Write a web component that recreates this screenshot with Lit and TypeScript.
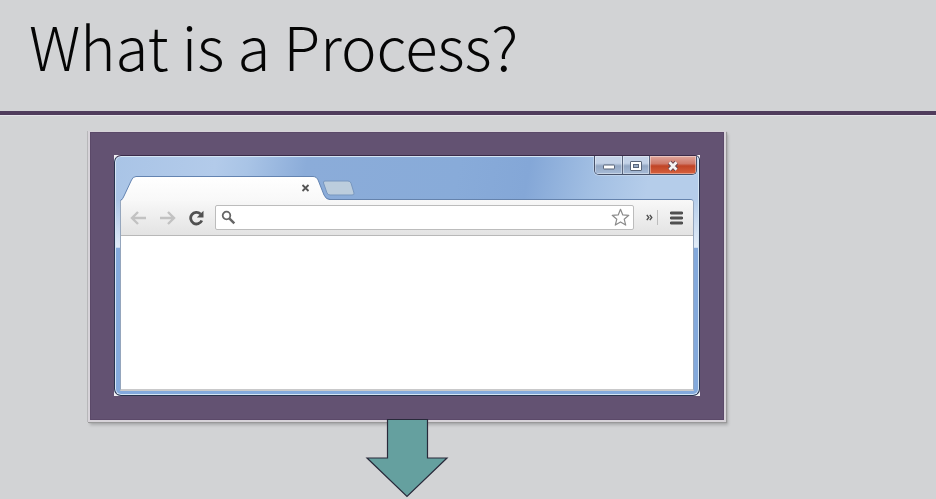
import { LitElement, html, css } from "lit";
import { customElement } from "lit/decorators.js";

@customElement("browser-window")
class BrowserWindow extends LitElement {
  static styles = css`
    :host { display: block; width: 586px; height: 241px; background: #f4f3f6; }
    .window { box-sizing: border-box; height: 241px; border: 1px solid #29344e; border-top-color: #3b2c4a; border-radius: 7px 5px 7px 7px; padding: 0 5px 4px; display: flex; flex-direction: column; position: relative; overflow: hidden;
      box-shadow: inset 0 0 0 1px #d5e5f4;
      background:
        linear-gradient(180deg, transparent 44px, rgba(240,246,252,.75) 91px, transparent 92px),
        linear-gradient(100deg, #a9c4e6 0, #b3cbea 100px, #a9c4e6 132px, #8bacd9 190px, #88abd9 340px, #84a7d7 410px, #a2bfe3 475px, #b5cdea 530px, #b5cdea 100%) 0 0 / 100% 92px no-repeat,
        #83a9dc; }
    .strip { height: 43px; flex: none; display: flex; align-items: flex-start; margin-right: -3px; }
    .tab { display: block; margin: 20px 0 0 0; flex: none; overflow: visible; position: relative; z-index: 1; }
    .controls { margin-left: auto; display: flex; box-sizing: border-box; height: 19px; width: 103px; border: 1px solid #48526a; border-top: 0; border-radius: 0 0 5px 5px; overflow: hidden; box-shadow: 0 0 0 1px #d3e1f180; }
    .control { display: flex; align-items: center; justify-content: center; border-right: 1px solid #59657d; box-shadow: inset 0 0 0 1px #ffffff60; background: linear-gradient(#c3d2e7 0 40%, #93a7c3 55%, #a7bbd7); width: 27px; }
    .control svg { position: relative; top: .5px; }
    .control.max { width: 26px; }
    .control.close { flex: 1; border: 0; background: linear-gradient(#dfa59b 0, #d07b6b 42%, #c04426 55%, #d7613e); }
    .body { flex: 1; display: flex; flex-direction: column; border: 1px solid #95a6bd; border-top-color: #6583ad; border-bottom: 2px solid #c9c9ca; border-radius: 3px 4px 0 0; background: #fff; }
    .bar { box-sizing: border-box; height: 36px; flex: none; padding: 0 9px; border-bottom: 1px solid #b8b8b8; background: linear-gradient(#f8f8f8, #e3e3e3); border-radius: 3px 3px 0 0; display: flex; align-items: center; }
    .bar svg { display: block; flex: none; }
    .fwd { margin-left: 12px; }
    .reload { margin-left: 12px; }
    .address { box-sizing: border-box; width: 419px; height: 25px; margin-left: 10px; background: #fff; border: 1px solid #bcbcbc; border-radius: 2px; display: flex; align-items: center; justify-content: space-between; padding: 0 3px 0 5px; }
    .more { margin-left: 12px; }
    .rule { width: 1px; height: 15px; margin-left: 4px; background: #bdbdbd; }
    .menu { margin-left: 12px; }
  `;

  render() {
    return html`
      <div class="window">
        <div class="strip">
          <svg class="tab" width="240" height="24" viewBox="0 0 240 24">
            <defs><linearGradient id="face" x1="0" y1="0" x2="0" y2="1"><stop stop-color="#fff"/><stop offset="1" stop-color="#f8f8f8"/></linearGradient></defs>
            <path d="M1 25Q3 23 4 20L11.500 4Q13 .5 16 .5H193Q197 .5 198.500 5L204 19Q206 23.500 209 23.500V25Z" fill="url(#face)"/>
            <path d="M.5 24.500Q3 23 4 20L11.500 4Q13 .5 16 .5H193Q197 .5 198.500 5L204 19Q206 23.500 210 23.500" fill="none" stroke="#6484b1"/>
            <path d="m182.500 9 6 6m0-6-6 6" stroke="#555" stroke-width="1.800"/>
            <path d="M205 5H228Q230 5 231 7L234 17Q234.500 19 232 19H210Q208 19 207 17L203.500 7Q203 5 205 5Z" fill="#bccddd" stroke="#7897bf"/>
          </svg>
          <div class="controls">
            <span class="control"><svg width="14" height="8"><rect x="1.500" y="3" width="11" height="4" rx=".5" fill="#fff" stroke="#596579"/></svg></span>
            <span class="control max"><svg width="14" height="12"><rect x="1.500" y="1.500" width="11" height="9" rx=".5" fill="#fff" stroke="#596579"/><rect x="4.500" y="4.500" width="5" height="3" fill="#9aacc6" stroke="#596579"/></svg></span>
            <span class="control close"><svg width="14" height="12"><path d="m3.500 2.300 7 7.400m0-7.400-7 7.400" stroke="#694650" stroke-width="4.800"/><path d="m3.500 2.300 7 7.400m0-7.400-7 7.400" stroke="#f6f3f3" stroke-width="2.700"/></svg></span>
          </div>
        </div>
        <div class="body">
          <div class="bar">
            <svg width="17" height="16"><path d="M16 8H2M8 2 2 8l6 6" fill="none" stroke="#c2c2c2" stroke-width="2.400"/></svg>
            <svg class="fwd" width="17" height="16"><path d="M1 8h14M9 2l6 6-6 6" fill="none" stroke="#c2c2c2" stroke-width="2.400"/></svg>
            <svg class="reload" width="17" height="16"><path d="M12.500 4A5.800 5.800 0 1 0 13.800 10.500" fill="none" stroke="#505050" stroke-width="2.800"/><path d="M15.500.8v6.700H8.800Z" fill="#505050"/></svg>
            <div class="address">
              <svg width="15" height="15"><circle cx="5.500" cy="5.500" r="3.800" fill="none" stroke="#666" stroke-width="1.800"/><path d="m8.300 8.300 5 5" stroke="#666" stroke-width="2.500"/></svg>
              <svg width="19" height="19"><path d="m9.500 1.300 2.300 5.600 6 .4-4.600 3.900 1.500 5.900-5.200-3.200-5.200 3.200 1.500-5.900L1.200 7.300l6-.4Z" fill="#fff" stroke="#8b8b8b" stroke-width="1.200" stroke-linejoin="round"/></svg>
            </div>
            <svg class="more" width="7" height="7"><path d="m.8.8 2 2.700-2 2.700m3-5.400 2 2.700-2 2.700" fill="none" stroke="#4e4e4e" stroke-width="1.400"/></svg>
            <span class="rule"></span>
            <svg class="menu" width="13" height="14"><path d="M1.200 2h10.600M1.200 7h10.600M1.200 12h10.600" stroke="#505050" stroke-width="2.800" stroke-linecap="round"/></svg>
          </div>
        </div>
      </div>`;
  }
}

@customElement("app-root")
class AppRoot extends LitElement {
  static styles = css`
    :host { display: block; width: 936px; height: 499px; overflow: hidden; background: #d2d3d5; }
    .heading { box-sizing: border-box; height: 116px; border-bottom: 1px solid #e4e2e8; }
    .title { box-sizing: border-box; margin: 0; height: 111px; padding-left: 29px; font: 200 59.900px/90px "Noto Sans CJK SC", "Open Sans", sans-serif; color: #050505; white-space: nowrap; }
    .line { height: 4px; background: #503c5c; }
    .figure { width: 638px; margin: 15px 0 0 88px; display: flex; flex-direction: column; align-items: center; }
    .frame { box-sizing: border-box; width: 638px; height: 291px; padding: 23px 0 0 24px; border: 2px solid #d7d3d9; border-top-width: 1px; background: #635272; box-shadow: inset 0 0 0 1px #5b4969, 0 1px 0 #999, 1px 1px 1px #999, -1px 0 0 #b7b7b9, 2px 3px 3px #0003; }
    .arrow { display: block; margin-top: -4px; position: relative; }
  `;

  render() {
    return html`
      <header class="heading">
        <h1 class="title">What is a Process?</h1>
        <div class="line"></div>
      </header>
      <main class="figure">
        <div class="frame"><browser-window></browser-window></div>
        <svg class="arrow" width="84" height="81"><path d="M22.500 1.500h40v38.500H82L42 78.500 2 40h20.500Z" fill="#65a09f" stroke="#28293a" stroke-width="1.200"/></svg>
      </main>`;
  }
}
